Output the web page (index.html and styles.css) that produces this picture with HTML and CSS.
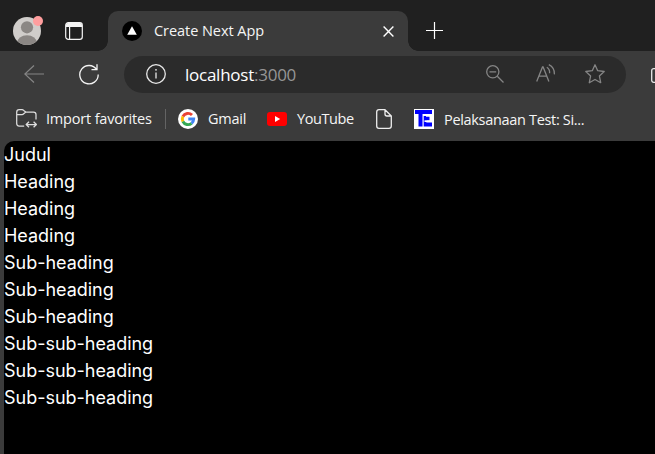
FILE: index.html
```html
<!DOCTYPE html>
<html lang="en">
<head>
<meta charset="utf-8">
<title>Create Next App</title>
<link rel="stylesheet" href="styles.css">
</head>
<body>
<div class="browser">
  <header class="tabstrip">
    <div class="profile">
      <svg width="28" height="28" viewBox="0 0 28 28"><defs><clipPath id="disc"><circle cx="14" cy="14" r="14"/></clipPath></defs><g clip-path="url(#disc)"><rect width="28" height="28" fill="#d0cdca"/><circle cx="14" cy="10.3" r="6.1" fill="#8b8784"/><ellipse cx="14" cy="26" rx="10" ry="7.8" fill="#8b8784"/></g></svg>
      <span class="badge"></span>
    </div>
    <svg class="workspaces" width="18" height="18" viewBox="0 0 18 18" fill="none" stroke="#f5f5f5" stroke-width="1.2"><rect x=".7" y=".7" width="16.6" height="16.6" rx="2.6"/><path d="M1 2.8Q1 1 3 1h12q2 0 2 1.8V5H1z" fill="#f5f5f5" stroke="none"/><path d="M4.6 5v12"/></svg>
    <div class="tab">
      <svg width="20" height="20" viewBox="0 0 20 20"><circle cx="10" cy="10" r="10"/><path d="M10 5.2l4.8 8.5H5.2z" fill="#fff"/></svg>
      <span class="label tab-title">Create Next App</span>
      <svg class="close" width="11" height="11" viewBox="0 0 11 11" stroke="#fff" stroke-width="1.4"><path d="M.6.6l9.8 9.8M10.4.6L.6 10.4"/></svg>
    </div>
    <svg class="new-tab" width="17" height="17" viewBox="0 0 17 17" stroke="#fff" stroke-width="1.2"><path d="M0 8.5h17M8.5 0v17"/></svg>
  </header>
  <nav class="toolbar">
    <svg class="back" width="20" height="18" viewBox="0 0 20 18" fill="none" stroke="#858585" stroke-width="1.2"><path d="M20 9H.8M10 .5L.8 9l9.2 8.5"/></svg>
    <svg class="reload" width="20" height="21" viewBox="0 0 20 21" fill="none" stroke="#f3f3f3" stroke-width="1.3"><path d="M17.600 5.500A9.200 9.200 0 1 0 19.200 10.600M18 .3v5.400h-5.500"/></svg>
    <div class="address">
      <svg width="20" height="20" viewBox="0 0 20 20" fill="none" stroke="#e8e8e8" stroke-width="1.3"><circle cx="10" cy="10" r="9.3"/><path d="M10 8.5v6"/><circle cx="10" cy="5.8" r=".9" fill="#e8e8e8" stroke="none"/></svg>
      <span class="url">localhost<span class="port">:3000</span></span>
      <svg class="zoom-out" width="18" height="18" viewBox="0 0 18 18" fill="none" stroke="#858585" stroke-width="1.3"><circle cx="6.8" cy="6.8" r="6.1"/><path d="M3.5 6.8h6.7M11.3 11.3l6.2 6.2"/></svg>
      <svg class="read" width="20" height="18" viewBox="0 0 20 18" fill="none" stroke="#858585" stroke-width="1.3"><path d="M.7 17.5L6.5 3h.6l5.8 14.5M2.8 12.2h8M10.8 3.2q3.2 2 2.8 6M12.8.7q6 3 5.6 9.7"/></svg>
      <svg class="star" width="20" height="20" viewBox="0 0 20 20" fill="none" stroke="#858585" stroke-width="1.3" stroke-linejoin="round"><path d="M10 .8l2.700 5.900 6.500.8-4.800 4.500 1.300 6.700-5.700-3.200-5.700 3.200L5.600 12 .8 7.500l6.500-.8z"/></svg>
    </div>
    <svg class="split" width="20" height="15" viewBox="0 0 20 15" fill="none" stroke="#e8e8e8" stroke-width="1.3"><rect x=".7" y=".7" width="18" height="13.600" rx="2"/></svg>
  </nav>
  <nav class="favorites">
    <svg class="folder" width="21" height="20" viewBox="0 0 21 20" fill="none" stroke="#ddd" stroke-width="1.25" stroke-linejoin="round"><path d="M8.200 17H3.200Q.7 17 .7 14.500V3.200Q.7.7 3.200.7H6q1 0 1.700.700L9.800 3H17.500q2.500 0 2.500 2.500V10.500M.7 5.500H6q1 0 1.700-.700L9.800 3M10.500 15.500h9.600M13 12.700l-2.800 2.800 2.800 2.800M17.600 12.700l2.800 2.800-2.800 2.800"/></svg>
    <span class="label import">Import favorites</span>
    <span class="divider"></span>
    <svg class="google" width="20" height="20" viewBox="0 0 20 20" fill="none" stroke-width="2.900"><circle cx="10" cy="10" r="10" fill="#fff"/><path d="M14 6.100A5.700 5.700 0 0 0 4.900 7.500" stroke="#ea4335"/><path d="M4.900 7.500a5.700 5.700 0 0 0 0 5" stroke="#fbbc05"/><path d="M4.900 12.500a5.700 5.700 0 0 0 8.700 1.800" stroke="#34a853"/><path d="M13.600 14.300A5.700 5.700 0 0 0 15.700 10H10.300" stroke="#4285f4"/></svg>
    <span class="label gmail">Gmail</span>
    <svg class="youtube" width="20" height="14" viewBox="0 0 20 14"><rect width="20" height="14" rx="3" fill="#f00"/><path d="M8 4l5.200 3L8 10z" fill="#fff"/></svg>
    <span class="label yt">YouTube</span>
    <svg class="page-icon" width="16" height="20" viewBox="0 0 16 20" fill="none" stroke="#eee" stroke-width="1.300" stroke-linejoin="round"><path d="M9 .7H3Q.7.7.7 3v14q0 2.300 2.300 2.300h10q2.300 0 2.300-2.300V7zM9 .7V5q0 2 2 2h4.300"/></svg>
    <svg class="te" width="20" height="20" viewBox="0 0 20 20" fill="#00f"><rect width="20" height="20" fill="#fff"/><path d="M1 1h17v4H8.500v12.500H4.500V5H1z"/><path d="M9.700 7H12v.7h3.500V11H12v2.500h6v4H9.700z"/><path d="M12 11h3.500v.5H12zM12 11.500h.7v2H12z"/><path d="M10.500 11.300h7.500v1.700h-7.500z" fill="#fff"/></svg>
    <span class="label test">Pelaksanaan Test: Si...</span>
  </nav>
  <main class="page">
    <p>Judul</p>
    <p>Heading</p>
    <p>Heading</p>
    <p>Heading</p>
    <p>Sub-heading</p>
    <p>Sub-heading</p>
    <p>Sub-heading</p>
    <p>Sub-sub-heading</p>
    <p>Sub-sub-heading</p>
    <p>Sub-sub-heading</p>
  </main>
</div>
</body>
</html>
```
FILE: styles.css
```css
* { box-sizing: border-box; }
body { margin: 0; overflow: hidden; background: #3b3b3b; }
svg { display: block; flex: none; }
.browser { display: flex; flex-direction: column; height: 454px; color: #fff; font-family: "Open Sans", "Noto Sans", sans-serif; }
.label { flex: none; font-size: 14.5px; line-height: 20px; white-space: nowrap; color: #f5f5f5; }
.tabstrip { display: flex; flex: none; height: 51px; padding: 11px 0 0 13px; background: #202020; }
.profile { position: relative; width: 28px; height: 28px; margin-top: 6px; }
.badge { position: absolute; top: -1px; right: -2px; width: 10px; height: 10px; border-radius: 50%; background: #ff9e9e; }
.workspaces { margin: 11px 25px 0 24px; }
.tab { position: relative; display: flex; align-items: center; width: 300px; height: 40px; padding: 0 14px; border-radius: 10px 10px 0 0; background: #3b3b3b; }
.tab::before, .tab::after { content: ""; position: absolute; bottom: 0; width: 10px; height: 10px; }
.tab::before { left: -10px; background: radial-gradient(circle at 0 0, #202020 9.5px, #3b3b3b 10px); }
.tab::after { right: -10px; background: radial-gradient(circle at 100% 0, #202020 9.5px, #3b3b3b 10px); }
.tab-title { margin-left: 12px; letter-spacing: -0.05px; }
.close { margin: 1px 0 0 auto; }
.new-tab { margin: 11px 0 0 18px; }
.toolbar { display: flex; flex: none; align-items: center; height: 46px; padding-left: 24px; overflow: hidden; }
.reload { margin: 1px 25px 0 35px; }
.address { display: flex; flex: none; align-items: center; width: 502px; height: 37px; padding: 0 21px 0 22px; border-radius: 19px; background: #2b2b2b; }
.url { margin: 1px 0 0 19px; font-size: 17px; line-height: 24px; letter-spacing: -0.25px; }
.port { color: #969696; }
.zoom-out { margin-left: auto; }
.read { margin: -2px 29px 0 32px; }
.split { margin: 2px 0 0 25px; }
.favorites { display: flex; flex: none; align-items: center; height: 44px; padding-left: 16px; }
.import { width: 106px; margin-left: 9px; letter-spacing: -0.18px; }
.divider { width: 1px; height: 20px; margin: 0 12px 0 13px; background: #646464; }
.gmail { width: 38px; margin-left: 10px; letter-spacing: -0.25px; }
.youtube { margin-left: 21px; }
.yt { width: 57px; margin-left: 10px; letter-spacing: -0.4px; }
.page-icon { margin: 0 22px; }
.test { margin: 2px 0 0 10px; letter-spacing: -0.32px; }
.page { flex: 1; margin-left: 4px; border-top-left-radius: 10px; background: #000; font: 18px/27px Inter, sans-serif; letter-spacing: -0.02px; }
.page p { margin: 0; }
```
